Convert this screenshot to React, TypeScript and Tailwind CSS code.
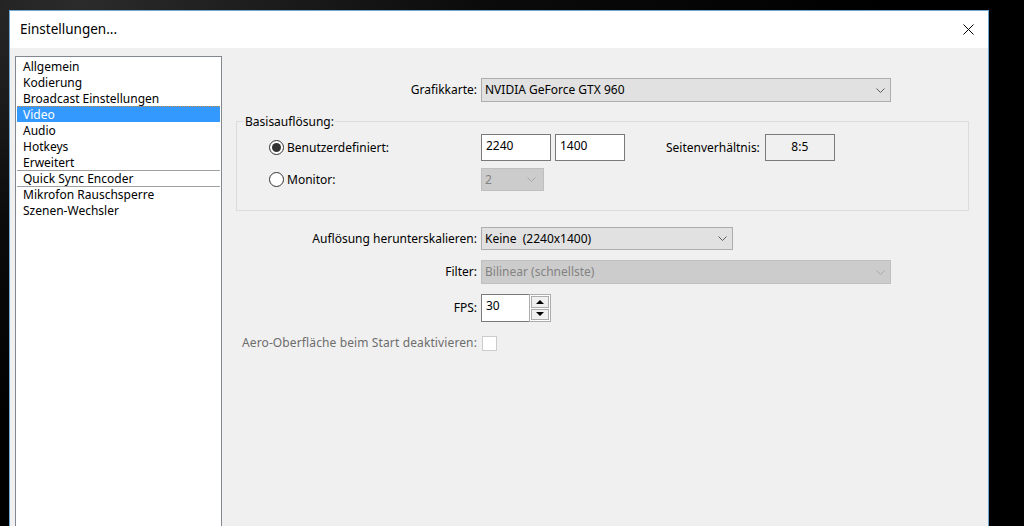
import type { ReactNode } from "react";

const items = [
  { name: "Allgemein" },
  { name: "Kodierung" },
  { name: "Broadcast Einstellungen" },
  { name: "Video", selected: true },
  { name: "Audio" },
  { name: "Hotkeys" },
  { name: "Erweitert" },
  { name: "Quick Sync Encoder", sep: true },
  { name: "Mikrofon Rauschsperre", sep: true },
  { name: "Szenen-Wechsler" },
];

function Chevron({ color }: { color: string }) {
  return (
    <svg width="9" height="5" viewBox="0 0 9 5" className="shrink-0">
      <polyline points="0.5,0.5 4.5,4.5 8.5,0.5" fill="none" stroke={color} strokeWidth="1" />
    </svg>
  );
}

function Combo({ value, className, disabled = false }: { value: string; className: string; disabled?: boolean }) {
  return (
    <div
      className={`flex items-center justify-between border pl-[3px] pr-[5px] ${
        disabled ? "border-[#bfbfbf] bg-[#cccccc] text-[#838383]" : "border-[#adadad] bg-[#e1e1e1] text-black"
      } ${className}`}
    >
      <span className="whitespace-pre">{value}</span>
      <Chevron color={disabled ? "#a8a8a8" : "#5a5a5a"} />
    </div>
  );
}

function Edit({ value }: { value: string }) {
  return (
    <div className="h-[27px] w-[70px] border border-[#7a7a7a] bg-white pl-[4px] pt-[2px] leading-[18px]">{value}</div>
  );
}

function Radio({ checked, label }: { checked?: boolean; label: string }) {
  return (
    <div className="flex items-center gap-[3px]">
      <span className="flex h-[15px] w-[15px] items-center justify-center rounded-full border border-[#333333] bg-white">
        {checked && <span className="h-[9px] w-[9px] rounded-full bg-[#333333]" />}
      </span>
      <span>{label}</span>
    </div>
  );
}

function Row({ label, muted, className, children }: { label: string; muted?: boolean; className: string; children: ReactNode }) {
  return (
    <div className={`flex items-center ${className}`}>
      <span
        className={`w-[245px] shrink-0 whitespace-nowrap pr-[4px] text-right ${
          muted ? "tracking-[0.12px] text-[#6d6d6d]" : ""
        }`}
      >
        {label}
      </span>
      {children}
    </div>
  );
}

function Spin({ value }: { value: string }) {
  return (
    <div className="flex h-[28px] w-[70px]">
      <div className="flex-1 border-y border-l border-[#7a7a7a] bg-white pl-[4px] pt-[2px] leading-[18px]">{value}</div>
      <div className="flex w-[22px] flex-col gap-[1px] border border-[#adadad] bg-white p-[1px]">
        <div className="flex flex-1 items-center justify-center border border-[#adadad] bg-[#f0f0f0]">
          <svg width="8" height="4" viewBox="0 0 8 4">
            <polygon points="0,4 4,0 8,4" fill="#000" />
          </svg>
        </div>
        <div className="flex flex-1 items-center justify-center border border-[#adadad] bg-[#f0f0f0]">
          <svg width="8" height="4" viewBox="0 0 8 4">
            <polygon points="0,0 8,0 4,4" fill="#000" />
          </svg>
        </div>
      </div>
    </div>
  );
}

export default function App() {
  return (
    <div className="h-[526px] w-[1024px] overflow-hidden bg-[radial-gradient(ellipse_at_8%_0%,#2b2b2b_0%,#0b0b0b_30%,#000_60%)] pl-[9px] pt-[10px] font-['Noto_Sans',sans-serif] text-[12px] text-black">
      <div className="flex h-[560px] w-[980px] flex-col border-x border-t border-[#6ea8d3] bg-[#f0f0f0]">
        {/* title bar */}
        <div className="flex h-[37px] shrink-0 items-center justify-between bg-white pl-[10px] pr-[14px]">
          <span className="text-[13.5px]">Einstellungen...</span>
          <svg width="11" height="11" viewBox="0 0 11 11">
            <path d="M0.5 0.5 L10.5 10.5 M10.5 0.5 L0.5 10.5" stroke="#000" strokeWidth="1" />
          </svg>
        </div>

        <div className="flex pl-[5px] pt-[8px]">
          {/* category list */}
          <div className="h-[520px] w-[207px] shrink-0 border border-[#828790] bg-white px-[1px] pt-[1px]">
            {items.map((it) => (
              <div
                key={it.name}
                className={`h-[16px] whitespace-nowrap pl-[6px] leading-[15px] ${
                  it.selected
                    ? "border-t border-dotted border-[#c98a4c] bg-[#3399ff] text-white"
                    : it.sep
                      ? "border-t border-[#a0a0a0]"
                      : "pt-[1px]"
                }`}
              >
                {it.name}
              </div>
            ))}
          </div>

          {/* settings */}
          <div className="flex flex-1 flex-col pl-[14px] pr-[19px] pt-[22px]">
            <Row label="Grafikkarte:" className="">
              <Combo value="NVIDIA GeForce GTX 960" className="h-[24px] w-[410px]" />
            </Row>

            <div className="relative mt-[19px] h-[90px] border border-[#dcdcdc] pl-[32px] pt-[12px]">
              <span className="absolute -top-[9px] left-[7px] bg-[#f0f0f0] px-[1px]">Basisauflösung:</span>
              <div className="flex h-[27px] items-center">
                <div className="w-[212px]">
                  <Radio checked label="Benutzerdefiniert:" />
                </div>
                <div className="flex gap-[4px]">
                  <Edit value="2240" />
                  <Edit value="1400" />
                </div>
                <span className="ml-[41px] mr-[5px]">Seitenverhältnis:</span>
                <div className="flex h-[27px] w-[70px] justify-center border border-[#7a7a7a] bg-[#f0f0f0] pt-[3px] leading-[18px]">
                  8:5
                </div>
              </div>
              <div className="mt-[7px] flex h-[23px] items-center">
                <div className="w-[212px]">
                  <Radio label="Monitor:" />
                </div>
                <Combo value="2" disabled className="h-[23px] w-[63px] pr-[7px]" />
              </div>
            </div>

            <Row label="Auflösung herunterskalieren:" className="mt-[16px]">
              <Combo value="Keine  (2240x1400)" className="h-[23px] w-[252px]" />
            </Row>

            <Row label="Filter:" className="mt-[10px]">
              <Combo value="Bilinear (schnellste)" disabled className="h-[24px] w-[410px]" />
            </Row>

            <Row label="FPS:" className="mt-[10px]">
              <Spin value="30" />
            </Row>

            <Row label="Aero-Oberfläche beim Start deaktivieren:" muted className="mt-[12px]">
              <span className="ml-[1px] h-[15px] w-[15px] border border-[#cccccc] bg-white" />
            </Row>
          </div>
        </div>
      </div>
    </div>
  );
}
